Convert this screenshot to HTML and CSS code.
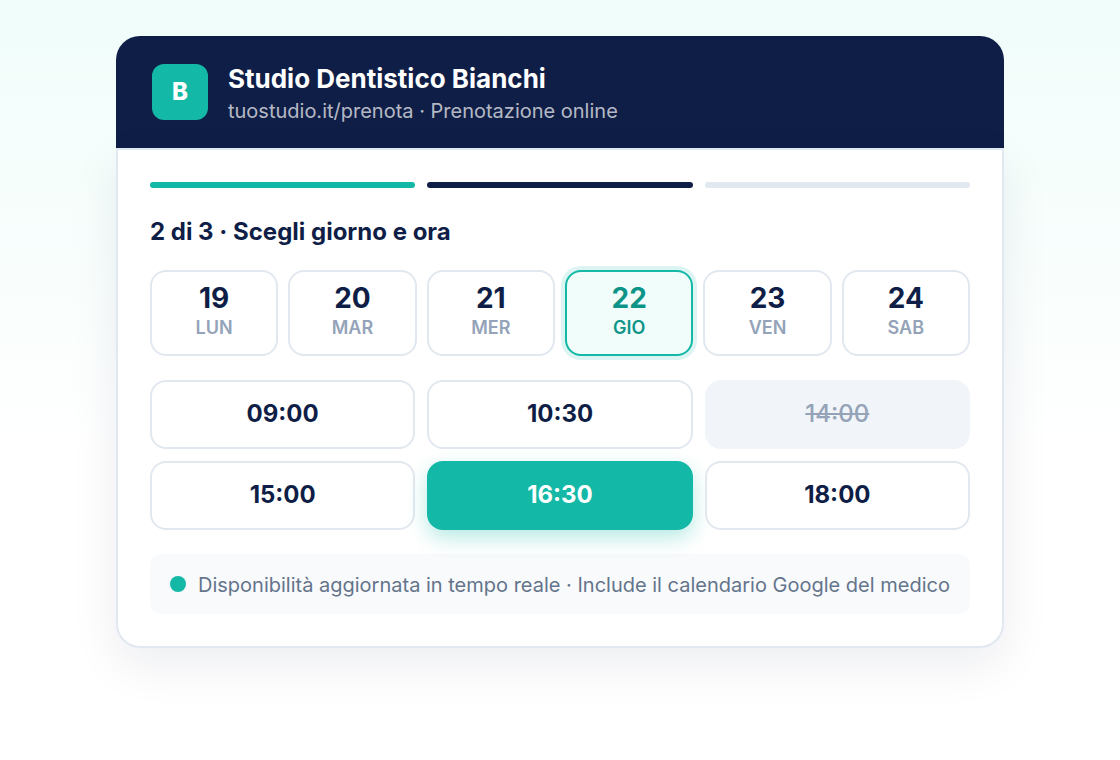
FILE: index.html
```html
<!DOCTYPE html>
<html lang="it">
<head>
    <meta charset="UTF-8">
    <meta name="viewport" content="width=device-width, initial-scale=1.0">
    <title>Studio Dentistico Bianchi - Prenotazione online</title>
    <link rel="stylesheet" href="styles.css">
</head>
<body>
    <main class="booking">
        <header class="header">
            <div class="logo">B</div>
            <div class="studio">
                <h1>Studio Dentistico Bianchi</h1>
                <p>tuostudio.it/prenota · Prenotazione online</p>
            </div>
        </header>

        <div class="content">
            <div class="steps">
                <span class="step done"></span>
                <span class="step current"></span>
                <span class="step"></span>
            </div>

            <h2>2 di 3 · Scegli giorno e ora</h2>

            <div class="days">
                <button type="button" class="day"><strong>19</strong><span>LUN</span></button>
                <button type="button" class="day"><strong>20</strong><span>MAR</span></button>
                <button type="button" class="day"><strong>21</strong><span>MER</span></button>
                <button type="button" class="day selected" aria-pressed="true"><strong>22</strong><span>GIO</span></button>
                <button type="button" class="day"><strong>23</strong><span>VEN</span></button>
                <button type="button" class="day"><strong>24</strong><span>SAB</span></button>
            </div>

            <div class="slots">
                <button type="button" class="slot">09:00</button>
                <button type="button" class="slot">10:30</button>
                <button type="button" class="slot" disabled>14:00</button>
                <button type="button" class="slot">15:00</button>
                <button type="button" class="slot selected" aria-pressed="true">16:30</button>
                <button type="button" class="slot">18:00</button>
            </div>

            <div class="note">
                <span class="dot"></span>
                <p>Disponibilità aggiornata in tempo reale · Include il calendario Google del medico</p>
            </div>
        </div>
    </main>
</body>
</html>
```
FILE: styles.css
```css
* { box-sizing: border-box; margin: 0; padding: 0; }
body { font-family: Inter, sans-serif; min-height: 100vh; padding: 36px 20px; background: linear-gradient(180deg, #f0fdfa 0%, #ffffff 60%); color: #0f1e46; }
.booking { max-width: 888px; margin: 0 auto; }

.header { display: flex; align-items: center; gap: 20px; padding: 28px 36px; background: #0f1e46; border-radius: 24px 24px 0 0; }
.logo { display: flex; align-items: center; justify-content: center; width: 56px; height: 56px; border-radius: 12px; background: #14b8a6; color: white; font-size: 24px; line-height: 28px; font-weight: 800; }
.studio h1 { font-size: 26px; line-height: 30px; font-weight: 700; color: white; }
.studio p { margin-top: 8px; font-size: 20px; line-height: 18px; color: rgba(255, 255, 255, 0.7); }

.content { padding: 32px; background: white; border: 2px solid #e2e8f0; border-radius: 0 0 24px 24px; box-shadow: 0 16px 48px rgba(15, 30, 70, 0.08); }
.steps { display: grid; grid-template-columns: repeat(3, 1fr); gap: 12px; }
.step { height: 6px; border-radius: 3px; background: #e2e8f0; }
.step.done { background: #14b8a6; }
.step.current { background: #0f1e46; }
h2 { margin: 28px 0 22px; font-size: 24px; line-height: 32px; font-weight: 700; }

.days { display: grid; grid-template-columns: repeat(6, 1fr); gap: 10px; }
.day { display: flex; flex-direction: column; align-items: center; padding: 8px 4px 14px; border: 2px solid #e2e8f0; border-radius: 16px; background: white; color: #0f1e46; font-family: inherit; cursor: pointer; }
.day strong { font-size: 28px; line-height: 36px; font-weight: 700; }
.day span { font-size: 18px; line-height: 24px; font-weight: 600; color: #94a3b8; }
.day.selected { background: #f0fdfa; border-color: #14b8a6; color: #0d9488; box-shadow: 0 0 0 4px rgba(20, 184, 166, 0.15); }
.day.selected span { color: #0d9488; }

.slots { display: grid; grid-template-columns: repeat(3, 1fr); gap: 12px; margin-top: 24px; }
.slot { padding: 18px 8px 19px; border: 2px solid #e2e8f0; border-radius: 16px; background: white; color: #0f1e46; font-family: inherit; font-size: 24px; line-height: 28px; font-weight: 700; cursor: pointer; }
.slot:disabled { background: #f1f5f9; border-color: #f1f5f9; color: #94a3b8; font-weight: 500; text-decoration: line-through; cursor: default; }
.slot.selected { background: #14b8a6; border-color: #14b8a6; color: white; box-shadow: 0 8px 20px rgba(20, 184, 166, 0.3); }

.note { display: flex; align-items: center; gap: 12px; margin-top: 24px; padding: 18px 20px; border-radius: 12px; background: #f8fafc; }
.note .dot { flex: none; width: 16px; height: 16px; border-radius: 50%; background: #14b8a6; }
.note p { padding-top: 2px; font-size: 20px; line-height: 22px; color: #64748b; }
```
